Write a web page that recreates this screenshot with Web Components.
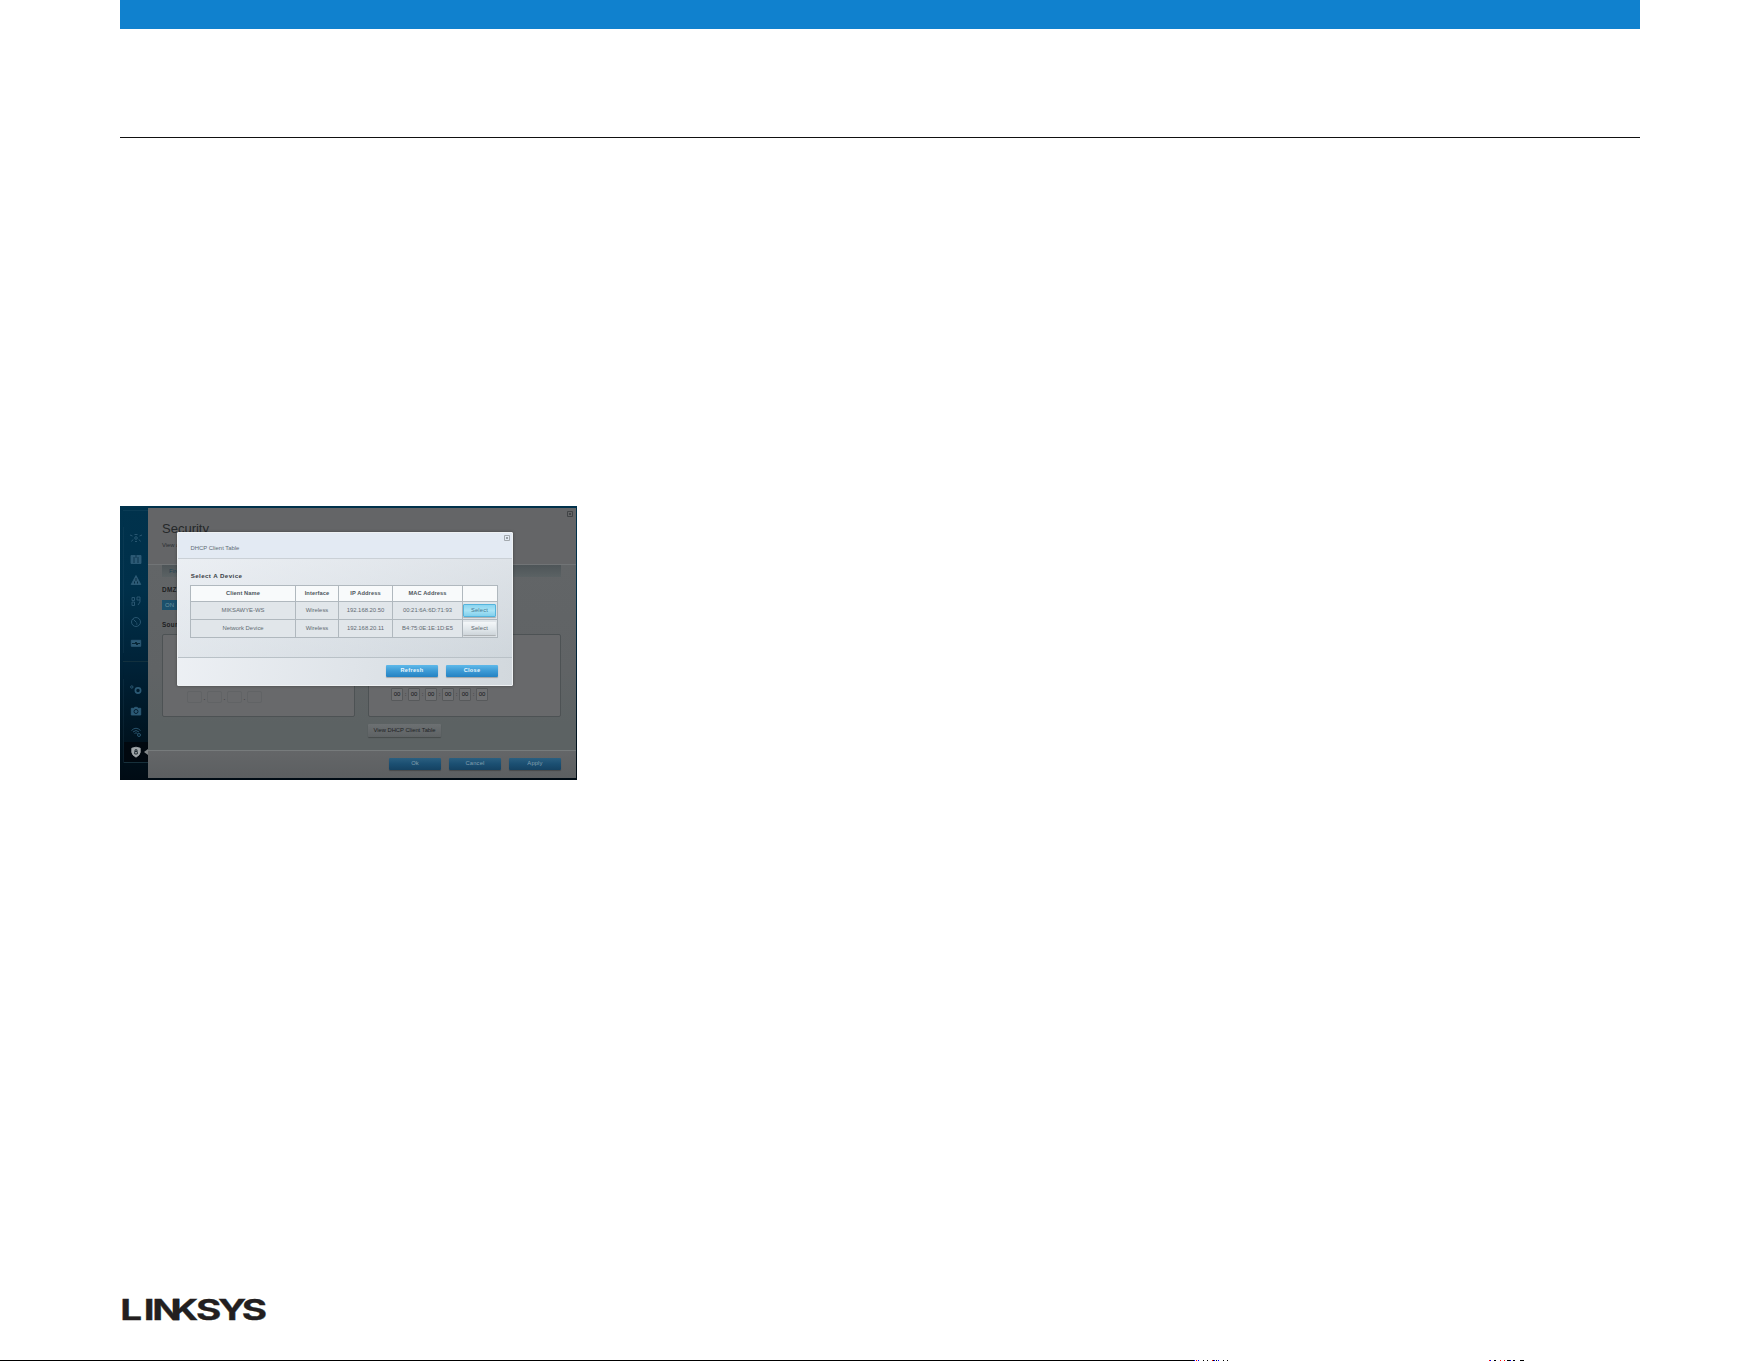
<!DOCTYPE html>
<html lang="en">
<head>
<meta charset="utf-8">
<title>Linksys</title>
<style>
  body { margin: 0; background: #fff; font-family: "Liberation Sans", Arial, sans-serif; }
</style>
</head>
<body>
<manual-page>
  <router-window>
    <client-dialog slot="dialog"></client-dialog>
  </router-window>
</manual-page>

<script>
// page sheet: blue bar, rule, figure and logo
class ManualPage extends HTMLElement {
  constructor() {
    super();
    const shadow = this.attachShadow({ mode: "open" });
    shadow.innerHTML = `
      <style>
        :host { display: flex; flex-direction: column; height: 1361px; overflow: hidden; }
        main { flex: 1; display: flex; flex-direction: column; width: 1520px; margin-left: 120px; }
        .bar { height: 29px; background: #1081ce; }
        .rule { height: 1px; margin-top: 108px; background: #111; }
        .figure { margin-top: 368px; width: 457px; }
        .logo { display: block; margin: 506px 0 0 -6px; overflow: visible; }
        .edge { display: block; flex: none; }
      </style>
      <main>
        <div class="bar"></div>
        <div class="rule"></div>
        <div class="figure"><slot></slot></div>
        <svg class="logo" width="170" height="48" viewBox="-6 -10 170 48">
          <g transform="translate(0 24) scale(1.38 1)" fill="#231f20" stroke="#231f20" stroke-width=".3" style="font: 700 28px Inter, sans-serif">
            <text x="0.1 17.2 23.4 36.6 55 71 88.2">LINKSYS</text>
          </g>
        </svg>
      </main>
      <svg class="edge" width="1761" height="1" shape-rendering="crispEdges">
        <path d="M0 .5H1194M1203 .5h1M1207 .5h1M1213 .5h1M1216 .5h1M1223 .5h1M1227 .5h1M1494 .5h2M1507 .5h3M1513 .5h2M1520 .5h4" stroke="#000"/>
        <path d="M1194 .5h1M1198 .5h1M1214 .5h1M1218 .5h1M1490 .5h1M1510 .5h1" stroke="#00f"/>
        <path d="M1196 .5h1M1212 .5h1M1489 .5h1M1500 .5h1M1504 .5h1" stroke="#f00"/>
      </svg>
    `;
  }
}

// glossy button, kinds: blue (default), dim, glow, plain, gray
class UiButton extends HTMLElement {
  constructor() {
    super();
    const shadow = this.attachShadow({ mode: "open" });
    shadow.innerHTML = `
      <style>
        :host {
          display: flex; align-items: center; justify-content: center; box-sizing: border-box;
          width: 52px; height: 12px; border-radius: 1px; font-size: 5.8px; line-height: 1;
          letter-spacing: .15px; white-space: nowrap;
          color: #eaf6fc; background: linear-gradient(#5eb9ea, #3c9ad5 50%, #2582c2);
          box-shadow: 0 1px 1px rgba(0, 0, 0, .25);
        }
        :host([kind="dim"]) { color: #83a0b0; background: linear-gradient(#2b5f80, #1b4f72 50%, #154262); }
        :host([kind="plain"]) { color: #5c666e; background: linear-gradient(#f4f7f9, #e1e7eb 55%, #ced5da); }
        :host([kind="glow"]) { color: #3e7590; background: linear-gradient(#8bd5f0, #a9e3f5 50%, #82d0ed); border: 1px solid #55b4dc; }
        :host([kind="gray"]) { color: #1f2326; background: linear-gradient(#6c7072, #5e6264); letter-spacing: 0; }
      </style>
      <slot></slot>
    `;
  }
}

const icons = {
  devices: `<path d="M0 3l2.500 1M12 3L9.500 4M1.500 9.500l1.500-2M10.500 9.500L9 7.500M4.500 2.500h3M5 9.500h2"/><circle cx="6" cy="6" r="1.300"/>`,
  guest: `<path d="M1 2.500h10v8H1z" fill="currentColor"/><path d="M4 4v6M8 4v6M6 2v3" stroke="#0a3249"/>`,
  parental: `<path d="M6 1.500L10.800 10.500H1.200z" fill="currentColor"/><path d="M6 4v3M4.500 9.500V7.500M7.500 9.500V7.500" stroke="#05283d"/>`,
  media: `<path d="M2 2.500h2.500v3H2zM2 7h2.500v3.500H2zM7 2h3v5L8 10M7 2v3h3"/>`,
  speed: `<circle cx="6" cy="6" r="4.500"/><path d="M3.500 3.500l3 3M6 8h1.500"/>`,
  usb: `<path d="M1.300 3.300h9.400v6H1.300z" fill="currentColor"/><path d="M2 6.500h8M5 5.500h2M6 7.500h2" stroke="#05202f"/>`,
  gears: `<circle cx="1.800" cy="3" r="1.200"/><circle cx="8" cy="6.500" r="2.600" stroke-width="1.700"/>`,
  camera: `<path d="M1.300 3.300h2.500l1-1h2.400l1 1h2.500v6.700H1.300z" fill="currentColor"/><circle cx="6" cy="6.500" r="2" stroke="#03192a"/>`,
  wifi: `<path d="M1.500 4.500q4.500-4.500 9 0M3 6q3-3 6 0M4.500 7.500q1.500-1.500 3 0"/><circle cx="9" cy="9" r="1.500"/>`,
  shield: `<path d="M6 1.200l4.200 1v4Q10 9 6 11.200Q2 9 1.800 6.200v-4z" fill="currentColor"/><path d="M4.700 5.500h2.600v2.500H4.700zM5 5V3.800h2V5" stroke="#08131a" stroke-width=".8"/>`
};

class SideMenu extends HTMLElement {
  constructor() {
    super();
    const shadow = this.attachShadow({ mode: "open" });
    const item = name => `<li class="${name}"><svg viewBox="0 0 12 12">${icons[name]}</svg></li>`;
    shadow.innerHTML = `
      <style>
        :host { display: block; box-sizing: border-box; width: 28px; padding: 2px 0 0 3px; }
        .top { height: 16px; border-top: 1px solid #0a3b54; }
        ul { margin: 0; padding: 0; list-style: none; border-left: 1px solid rgba(60, 100, 120, .15); }
        li { box-sizing: border-box; height: 21px; display: flex; align-items: center; justify-content: center; color: #2c5a75; padding-right: 1px; }
        svg { width: 12px; height: 12px; fill: none; stroke: currentColor; stroke-width: .9; }
        .gap { height: 17px; border-top: 1px solid #12303e; margin-top: 8px; }
        .shield { position: relative; color: #a1a7aa; background: #01080f; border-bottom: 1px solid #17303b; }
        /* arrow that points to the open page */
        .shield::after { content: ""; position: absolute; right: 0; top: 7px; border: 3px solid transparent; border-right: 4px solid #828688; border-left: 0; }
      </style>
      <div class="top"></div>
      <ul>${["devices", "guest", "parental", "media", "speed", "usb"].map(item).join("")}</ul>
      <div class="gap"></div>
      <ul>${["gears", "camera", "wifi", "shield"].map(item).join("")}</ul>
    `;
  }
}

// router page behind the dialog
class RouterWindow extends HTMLElement {
  constructor() {
    super();
    const shadow = this.attachShadow({ mode: "open" });
    const mac = Array(6).fill("<b>00</b>").join("<i>:</i>");
    shadow.innerHTML = `
      <style>
        :host {
          position: relative; box-sizing: border-box; display: flex; width: 457px; height: 274px;
          padding: 2px 1px 2px 0; overflow: hidden; font-size: 6px; line-height: 1;
          background: linear-gradient(#00324c, #00304a 30%, #002136 60%, #00131f 85%, #000b14); color: #1d2022;
        }
        .page { flex: 1; display: flex; flex-direction: column; background: linear-gradient(#636668, #606365 60%, #5c6263 80%); }
        header { box-sizing: border-box; height: 57px; padding: 14px 0 0 14px; display: flex; flex-direction: column; gap: 7px; background: #646567; border-bottom: 1px solid #717476; position: relative; }
        h1 { margin: 0; font-size: 13px; font-weight: 400; line-height: 14px; color: #25282a; }
        header p { margin: 0; font-size: 5.8px; color: #292e31; }
        header svg { position: absolute; right: 3px; top: 3px; }
        .body { height: 185px; box-sizing: border-box; padding: 0 15px 0 14px; display: flex; flex-direction: column; }
        .tabs { height: 12px; box-sizing: border-box; padding: 3px 7px; background: linear-gradient(#4e5558, #5b6264); color: #1f4252; }
        h2 { margin: 9px 0 0; font-size: 6.4px; line-height: 7px; letter-spacing: .3px; }
        .on { margin-top: 7px; width: 24px; height: 10px; box-sizing: border-box; padding: 2px 3px; background: #1c506c; color: #6d929f; }
        .source { margin-top: 11px; }
        .panels { margin-top: 6px; display: grid; grid-template-columns: 193px 193px; gap: 13px; height: 83px; }
        .panels > div { box-sizing: border-box; border: 1px solid #4d5254; border-radius: 2px; background: #68696b; display: flex; align-items: flex-end; }
        .ip { padding: 0 0 13px 24px; gap: 1px; color: #35383a; }
        .ip b { width: 15px; height: 12px; box-sizing: border-box; border: 1px solid #616365; border-radius: 2px; }
        .ip i { width: 3px; text-align: center; font-weight: 700; line-height: 10px; }
        .mac { padding: 0 0 15px 22px; font-size: 6px; }
        .mac b { width: 12px; height: 13px; box-sizing: border-box; border: 1px solid #57595b; border-radius: 1px; background: #707173; text-align: center; line-height: 11px; font-weight: 400; color: #151719; }
        .mac i { width: 5px; text-align: center; line-height: 13px; font-style: normal; }
        .view { width: 73px; height: 13px; margin: 7px 0 0 206px; }
        footer { flex: 1; box-sizing: border-box; padding: 7px 15px 0; display: flex; justify-content: flex-end; gap: 8px; border-top: 1px solid #777b7c; background: linear-gradient(#646668, #5c5f61); }
      </style>
      <side-menu></side-menu>
      <div class="page">
        <header>
          <h1>Security</h1>
          <p>View and</p>
          <svg width="6" height="6" viewBox="0 0 6 6"><path d="M.5.5h5v5h-5z" fill="none" stroke="#414446"/><path d="M2 2l2 2M4 2L2 4" stroke="#414446"/></svg>
        </header>
        <div class="body">
          <div class="tabs">Firewall</div>
          <h2>DMZ</h2>
          <div class="on">ON</div>
          <h2 class="source">Source</h2>
          <div class="panels">
            <div class="ip"><b></b><i>.</i><b></b><i>.</i><b></b><i>.</i><b></b></div>
            <div class="mac">${mac}</div>
          </div>
          <ui-button class="view" kind="gray">View DHCP Client Table</ui-button>
        </div>
        <footer>
          <ui-button kind="dim">Ok</ui-button>
          <ui-button kind="dim">Cancel</ui-button>
          <ui-button kind="dim">Apply</ui-button>
        </footer>
      </div>
      <slot name="dialog"></slot>
    `;
  }
}

class ClientDialog extends HTMLElement {
  constructor() {
    super();
    const shadow = this.attachShadow({ mode: "open" });
    const rows = [
      ["MIKSAWYE-WS", "Wireless", "192.168.20.50", "00:21:6A:6D:71:93", "glow"],
      ["Network Device", "Wireless", "192.168.20.11", "B4:75:0E:1E:1D:E5", "plain"]
    ];
    shadow.innerHTML = `
      <style>
        /* modal window over the page */
        :host {
          position: absolute; left: 57px; top: 26px; width: 336px; height: 154px; box-sizing: border-box;
          display: flex; flex-direction: column; border: 1px solid #eef1f3; border-radius: 1px;
          background: linear-gradient(100deg, #eef1f5, #dfe4e9 55%, #d2d8dd); color: #626b73;
          font-size: 5.9px; line-height: 1; box-shadow: 0 0 3px rgba(0, 0, 0, .35);
        }
        header { height: 26px; flex: none; display: flex; justify-content: space-between; box-sizing: border-box; padding: 13px 2px 0 12.5px; background: #e3eaf3; border-bottom: 1px solid #cad0d6; }
        header svg { margin-top: -11px; }
        .body { height: 98px; flex: none; box-sizing: border-box; padding: 14px 14px 0 12px; background: linear-gradient(#e8ecf180, #c9d2d950); }
        h3 { margin: 0 0 6px; font-size: 6.2px; line-height: 6px; letter-spacing: .4px; text-indent: .7px; color: #3a4147; }
        .table {
          display: grid; grid-template-columns: 104px 42px 53px 69px 34px; grid-template-rows: 15px 17px 17px;
          gap: 1px; box-sizing: border-box; width: 308px; border: 1px solid #b0b8be; background: #b0b8be;
        }
        .table > div { display: flex; align-items: center; justify-content: center; background: #e1e6ea; white-space: nowrap; }
        .table > .th { background: #f8fafb; color: #4d555c; font-weight: 700; font-size: 5.7px; letter-spacing: .1px; }
        .table ui-button { width: 33px; height: 13px; margin-right: 1px; }
        footer { flex: 1; display: flex; justify-content: flex-end; box-sizing: border-box; gap: 8px; padding: 7px 14px 0; border-top: 1px solid #b9c1c7; }
        footer ui-button { font-weight: 700; font-size: 5.6px; letter-spacing: .3px; }
      </style>
      <header>
        <span>DHCP Client Table</span>
        <svg width="6" height="6" viewBox="0 0 6 6"><path d="M.5.5h5v5h-5z" fill="none" stroke="#a3a9ae"/><path d="M2 2l2 2M4 2L2 4" stroke="#989fa5"/></svg>
      </header>
      <div class="body">
        <h3>Select A Device</h3>
        <div class="table">
          <div class="th">Client Name</div><div class="th">Interface</div><div class="th">IP Address</div><div class="th">MAC Address</div><div class="th"></div>
          ${rows.map(([name, via, ip, mac, kind]) => `
            <div>${name}</div><div>${via}</div><div>${ip}</div><div>${mac}</div>
            <div><ui-button kind="${kind}">Select</ui-button></div>`).join("")}
        </div>
      </div>
      <footer>
        <ui-button>Refresh</ui-button>
        <ui-button>Close</ui-button>
      </footer>
    `;
  }
}

customElements.define("ui-button", UiButton);
customElements.define("side-menu", SideMenu);
customElements.define("client-dialog", ClientDialog);
customElements.define("router-window", RouterWindow);
customElements.define("manual-page", ManualPage);
</script>
</body>
</html>
